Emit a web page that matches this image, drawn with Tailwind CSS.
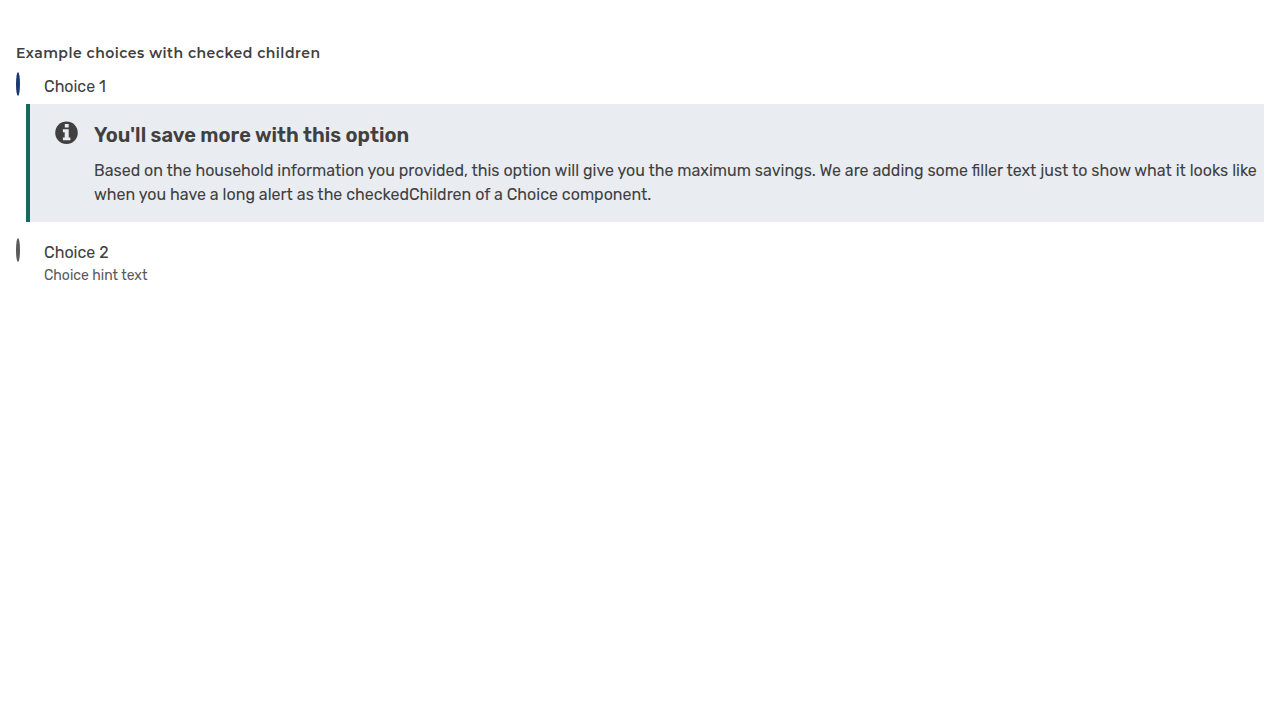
<!DOCTYPE html>
<html lang="en">
<head>
<meta charset="utf-8">
<title>Choices</title>
<script src="https://cdn.jsdelivr.net/npm/@tailwindcss/browser@4"></script>
</head>
<body class="bg-white font-[Rubik,Roboto,sans-serif] text-base text-[#404040]">
<main class="px-4 pt-[41px]">
  <fieldset>
    <legend class="h-[31px] text-sm leading-6 font-semibold tracking-[0.5px] whitespace-nowrap font-[Montserrat,Inter,sans-serif]">Example choices with checked children</legend>
    <label class="flex h-8 items-start gap-6">
      <span class="h-6 w-1 rounded-[50%] border-2 border-[#1c3a72] bg-[#1c3a72]"></span>
      <span class="pt-[3px] leading-6 tracking-[-0.03px]">Choice 1</span>
    </label>
    <section class="ml-2.5 flex h-[118px] border-l-4 border-[#146a5d] bg-[#e9ecf1] pt-4 pl-[25px]">
      <svg class="mt-px h-6 w-[23px] shrink-0" viewBox="0 0 23 24"><circle cx="11.5" cy="11.7" r="11.3" fill="#404040"/><path fill="#e9ecf1" d="M9.8 3h3.9v3.5H9.8zM7.9 8.3h5.8v8.1h1.7v2.9H7.9v-2.9h1.8v-5.1H7.9z"/></svg>
      <div class="ml-4">
        <h2 class="mt-px text-xl leading-7 font-semibold tracking-[0.03px] whitespace-nowrap">You'll save more with this option</h2>
        <p class="mt-2.5 leading-6 whitespace-nowrap">Based on the household information you provided, this option will give you the maximum savings. We are adding some filler text just to show what it looks like<br>when you have a long alert as the checkedChildren of a Choice component.</p>
      </div>
    </section>
    <label class="mt-4 flex items-start gap-6">
      <span class="h-6 w-1 rounded-[50%] border-2 border-[#5a5a5a] bg-[#5a5a5a]"></span>
      <span class="pt-[3px] leading-6">Choice 2<span class="block text-sm leading-[22px] text-[#5a5a5a]">Choice hint text</span></span>
    </label>
  </fieldset>
</main>
</body>
</html>
